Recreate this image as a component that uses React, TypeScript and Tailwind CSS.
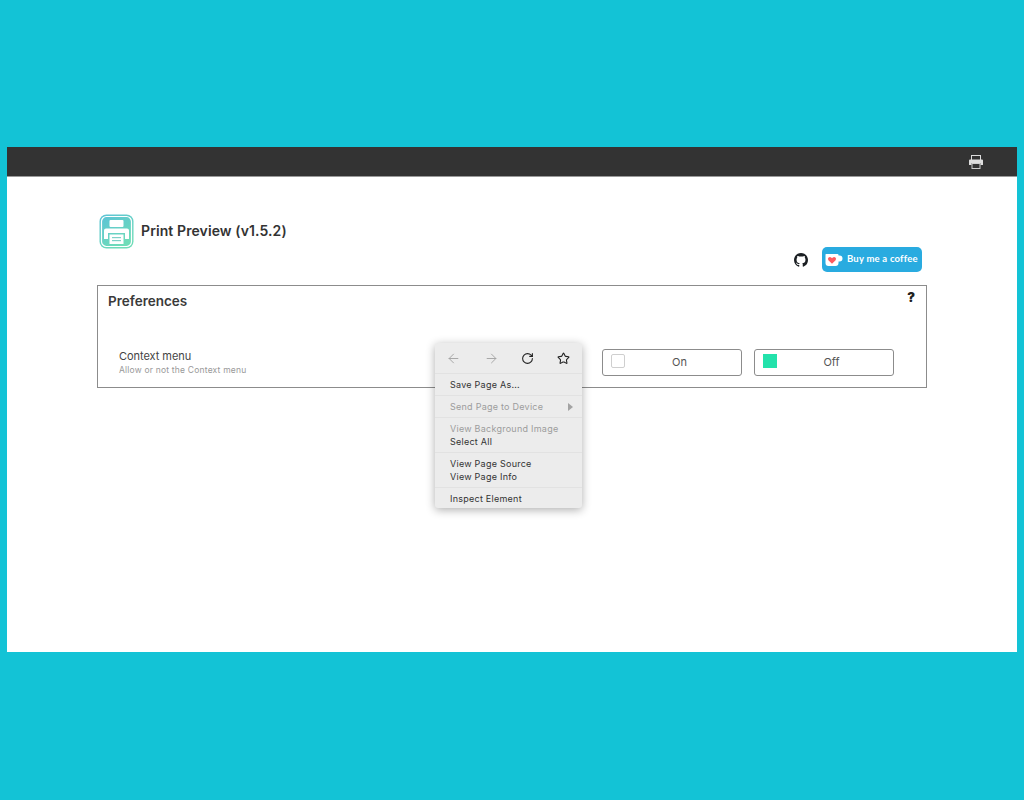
import { ArrowLeft, ArrowRight, RotateCw, Star } from 'lucide-react'

const AppLogo = () => (
    <svg width="35" height="35" viewBox="0 0 35 35" className="shrink-0">
        <defs>
            <linearGradient id="logo" x1="0" y1="0" x2="0.6" y2="1">
                <stop offset="0" stopColor="#5cc3d6" />
                <stop offset="1" stopColor="#6fdcb8" />
            </linearGradient>
        </defs>
        <rect x="0.5" y="0.5" width="34" height="34" rx="7" fill="url(#logo)" />
        <rect x="2.5" y="2.5" width="30" height="30" rx="5" fill="url(#logo)" stroke="#fff" strokeWidth="1.2" />
        <rect x="10.5" y="6" width="14" height="7" rx="1" fill="#fff" />
        <path d="M7 14.5h21a2 2 0 0 1 2 2v8.5h-4v-6H9v6H5v-8.5a2 2 0 0 1 2-2z" fill="#fff" />
        <rect x="10.5" y="20.5" width="14" height="9.5" fill="#fff" />
        <rect x="13" y="23" width="9" height="1.2" fill="#7fd0c8" />
        <rect x="13" y="26" width="9" height="1.2" fill="#7fd0c8" />
    </svg>
)

const GithubMark = () => (
    <svg width="14" height="14" viewBox="0 0 16 16" fill="#1b1f23">
        <path d="M8 0C3.58 0 0 3.58 0 8c0 3.54 2.29 6.53 5.47 7.59.4.07.55-.17.55-.38 0-.19-.01-.82-.01-1.49-2.01.37-2.53-.49-2.69-.94-.09-.23-.48-.94-.82-1.13-.28-.15-.68-.52-.01-.53.63-.01 1.08.58 1.23.82.72 1.21 1.87.87 2.33.66.07-.52.28-.87.51-1.07-1.78-.2-3.64-.89-3.64-3.95 0-.87.31-1.59.82-2.15-.08-.2-.36-1.02.08-2.12 0 0 .67-.21 2.2.82.64-.18 1.32-.27 2-.27s1.36.09 2 .27c1.53-1.04 2.2-.82 2.2-.82.44 1.1.16 1.92.08 2.12.51.56.82 1.27.82 2.15 0 3.07-1.87 3.75-3.65 3.95.29.25.54.73.54 1.48 0 1.07-.01 1.93-.01 2.2 0 .21.15.46.55.38A8.01 8.01 0 0 0 16 8c0-4.42-3.58-8-8-8z" />
    </svg>
)

const KofiCup = () => (
    <svg width="18" height="12" viewBox="0 0 18 12">
        <path d="M1 0h11.5a1 1 0 0 1 1 1v.5h1a2.8 2.8 0 0 1 0 6h-1V9a3 3 0 0 1-3 3H3.5a3 3 0 0 1-3-3V.5A.5.5 0 0 1 1 0z" fill="#fff" />
        <path d="M7 9.8 3.4 6.2a2 2 0 0 1 2.8-2.8l.8.8.8-.8a2 2 0 0 1 2.8 2.8z" fill="#ff5a5f" />
    </svg>
)

const PrinterGlyph = () => (
    <svg width="14" height="14" viewBox="0 0 14 14">
        <rect x="2.5" y="0.5" width="9" height="5" fill="#333" stroke="#ddd" />
        <path d="M1 4.5h12a1 1 0 0 1 1 1V10h-2.5V8h-9v2H0V5.5a1 1 0 0 1 1-1z" fill="#ddd" />
        <rect x="3" y="8.5" width="8" height="5" fill="#333" stroke="#ccc" />
    </svg>
)

const Option = ({ label, checked }: { label: string; checked?: boolean }) => (
    <div className="relative flex h-[27px] w-[140px] items-center justify-center rounded-[3px] border border-[#8c8c8c] bg-white pl-[15px] text-[11px] text-[#555]">
        <span
            className={
                checked
                    ? 'absolute left-[8px] top-[4px] size-[14px] bg-[#23e2ab]'
                    : 'absolute left-[8px] top-[4px] size-[14px] rounded-[2px] border border-[#cfcfcf]'
            }
        />
        {label}
    </div>
)

const MenuItem = ({ label, disabled }: { label: string; disabled?: boolean }) => (
    <div
        className={
            disabled
                ? 'h-[13.5px] pl-[15px] text-[9px] leading-[13.5px] tracking-[0.25px] text-[#9c9c9c]'
                : 'h-[13.5px] pl-[15px] text-[9px] leading-[13.5px] tracking-[0.25px] text-[#333]'
        }
    >
        {label}
    </div>
)

const ContextMenu = () => (
    <div className="absolute left-[428px] top-[196px] h-[165px] w-[147px] rounded-[3px] bg-[#ececec] shadow-[0_2px_10px_rgba(0,0,0,0.32)]">
        <div className="flex h-[31px] items-center justify-between border-b border-[#e2e2e2] pl-[11px] pr-[12px]">
            <ArrowLeft size={15} strokeWidth={1.5} className="text-[#a3a3a3]" />
            <ArrowRight size={15} strokeWidth={1.5} className="text-[#a3a3a3]" />
            <RotateCw size={13} strokeWidth={2} className="text-[#222]" />
            <Star size={13} strokeWidth={2} className="text-[#222]" />
        </div>
        <div className="flex h-[22px] items-center border-b border-[#e2e2e2]">
            <MenuItem label="Save Page As..." />
        </div>
        <div className="relative flex h-[22px] items-center border-b border-[#e2e2e2]">
            <MenuItem label="Send Page to Device" disabled />
            <span className="absolute right-[9px] top-[7px] size-0 border-y-[4px] border-l-[5px] border-y-transparent border-l-[#a3a3a3]" />
        </div>
        <div className="flex h-[35px] flex-col justify-center border-b border-[#e2e2e2]">
            <MenuItem label="View Background Image" disabled />
            <MenuItem label="Select All" />
        </div>
        <div className="flex h-[35px] flex-col justify-center border-b border-[#e2e2e2]">
            <MenuItem label="View Page Source" />
            <MenuItem label="View Page Info" />
        </div>
        <div className="flex h-[21px] items-center pt-[1px]">
            <MenuItem label="Inspect Element" />
        </div>
    </div>
)

export default function App() {
    return (
        <div className="h-[800px] bg-[#13c3d6] pl-[7px] pr-[7px] pt-[147px] font-['Inter',sans-serif]">
            <div className="relative h-[505px] bg-white">
                <div className="flex h-[30px] items-center justify-end border-b border-[#9a9a9a] bg-[#333333] pr-[34px]">
                    <PrinterGlyph />
                </div>

                <div className="pl-[90px] pr-[90px]">
                    <div className="flex items-center gap-[7px] pl-[2px] pt-[37px]">
                        <AppLogo />
                        <span className="mt-[-2px] text-[14px] font-semibold tracking-[0.1px] text-[#333]">
                            Print Preview (v1.5.2)
                        </span>
                    </div>

                    <div className="mt-[-2px] flex h-[25px] items-center justify-end gap-[14px] pr-[5px]">
                        <GithubMark />
                        <div className="flex h-[25px] w-[100px] items-center justify-start gap-[4px] rounded-[5px] bg-[#29abe0] pl-[3px] font-['Lato',sans-serif] text-[9.5px] font-bold tracking-[0.2px] text-white">
                            <KofiCup />
                            Buy me a coffee
                        </div>
                    </div>

                    <div className="relative mt-[13px] h-[103px] w-[830px] border border-[#8c8c8c]">
                        <div className="pl-[10px] pt-[6px] text-[13.5px] font-semibold leading-[18px] text-[#3a3a3a]">
                            Preferences
                        </div>
                        <span className="absolute right-[11px] top-[2px] text-[13px] font-black text-[#222]">
                            ?
                        </span>
                        <div className="flex items-start justify-between pl-[21px] pr-[32px] pt-[39px]">
                            <div>
                                <div className="text-[11px] leading-[14px] tracking-[-0.05px] text-[#444]">
                                    Context menu
                                </div>
                                <div className="mt-[1px] text-[8.5px] leading-[12px] tracking-[0.2px] text-[#999]">
                                    Allow or not the Context menu
                                </div>
                            </div>
                            <div className="flex gap-[12px]">
                                <Option label="On" />
                                <Option label="Off" checked />
                            </div>
                        </div>
                    </div>
                </div>

                <ContextMenu />
            </div>
        </div>
    )
}
